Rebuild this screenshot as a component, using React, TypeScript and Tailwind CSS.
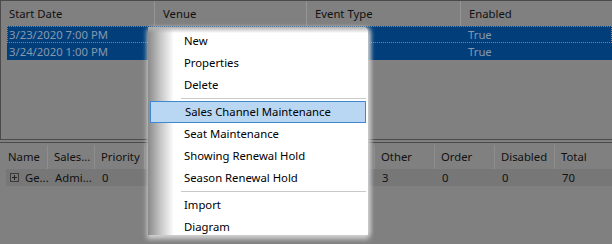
import React from "react";

const F = "font-['Noto_Sans',sans-serif] text-[11.3px] leading-none";

function TopHeader() {
  const cols = [
    { w: "w-[154px]", t: "Start Date" },
    { w: "w-[152px]", t: "Venue" },
    { w: "w-[154px]", t: "Event Type" },
    { w: "flex-1", t: "Enabled" },
  ];
  return (
    <div className="flex h-[25px] items-stretch">
      {cols.map((c, i) => (
        <div
          key={i}
          className={`${c.w} flex items-center pl-[8px] text-[#111] ${i < 3 ? "border-r border-[#959595]" : ""} ${i > 0 ? "pl-[7px]" : ""}`}
        >
          {c.t}
        </div>
      ))}
    </div>
  );
}

function SelRow({ date, focus }: { date: string; focus?: boolean }) {
  return (
    <div className="ml-[6px] h-[17px] relative bg-[#023f7a] flex items-center text-[#8798ad]">
      {focus && (
        <div className="absolute inset-0 border border-dotted border-[#c0702a]" />
      )}
      <div className="w-[148px] pl-[2px]">{date}</div>
      <div className="w-[152px]" />
      <div className="w-[154px]" />
      <div className="pl-[7px]">True</div>
    </div>
  );
}

function BottomGrid() {
  const head = [
    { w: "w-[42px]", t: "Name" },
    { w: "w-[47px]", t: "Sales..." },
    { w: "w-[50px]", t: "Priority" },
    { w: "w-[230px]", t: "" },
    { w: "w-[60px]", t: "Other" },
    { w: "w-[60px]", t: "Order" },
    { w: "w-[60px]", t: "Disabled" },
    { w: "flex-1", t: "Total" },
  ];
  const data = ["Ge...", "Admi...", "0", "", "3", "0", "0", "70"];
  return (
    <div className="border-t border-[#4a4a4a] pt-[2px]">
      <div className="ml-[6px] flex h-[24px]">
        {head.map((c, i) => (
          <div
            key={i}
            className={`${c.w} flex items-center pl-[2px] text-[#111] ${i < 7 ? "border-r border-[#8e8e8e]" : ""} ${i > 0 ? "pl-[6px]" : ""}`}
          >
            {c.t}
          </div>
        ))}
      </div>
      <div className="ml-[6px] flex h-[17px] bg-[#777777] text-[#111]">
        {head.map((c, i) => (
          <div key={i} className={`${c.w} flex items-center ${i > 0 ? "pl-[7px]" : "pl-[4px]"}`}>
            {i === 0 ? (
              <>
                <span className="relative w-[9px] h-[9px] border border-[#3a3a3a] mr-[6px] shrink-0">
                  <span className="absolute left-[1px] right-[1px] top-[3px] h-[1px] bg-[#222]" />
                  <span className="absolute top-[1px] bottom-[1px] left-[3px] w-[1px] bg-[#222]" />
                </span>
                <span>{data[i]}</span>
              </>
            ) : (
              data[i]
            )}
          </div>
        ))}
      </div>
    </div>
  );
}

function MenuItem({ t, hl }: { t: string; hl?: boolean }) {
  return (
    <div
      className={`relative mx-[2px] h-[22px] flex items-center pl-[34px] text-[#000] ${hl ? "bg-[#b9d7f3] border border-[#3f88d0] pl-[33px]" : ""}`}
    >
      {t}
    </div>
  );
}

function Sep() {
  return (
    <div className="h-[5px] flex items-center pl-[33px] pr-[2px]">
      <div className="h-[1px] w-full bg-[#c9c9c9]" />
    </div>
  );
}

function Menu() {
  return (
    <div className="absolute left-[148px] top-[27px] w-[220px] h-[208px] bg-white rounded-tr-[5px] shadow-[0_3px_5px_1px_rgba(215,215,215,0.9),3px_0_4px_0_rgba(200,200,200,0.8)]">
      <div className="absolute left-0 top-0 bottom-0 w-[26px] bg-gradient-to-r from-[#8a8a8a] via-[#c8c8c8] to-white" />
      <div className="absolute left-0 right-0 top-0 h-[6px] bg-gradient-to-b from-[#b0b0b0] to-white/0 rounded-tr-[5px]" />
      <div className={`relative pt-[3px] ${F}`}>
        <MenuItem t="New" />
        <MenuItem t="Properties" />
        <MenuItem t="Delete" />
        <Sep />
        <MenuItem t="Sales Channel Maintenance" hl />
        <MenuItem t="Seat Maintenance" />
        <MenuItem t="Showing Renewal Hold" />
        <MenuItem t="Season Renewal Hold" />
        <Sep />
        <MenuItem t="Import" />
        <MenuItem t="Diagram" />
      </div>
    </div>
  );
}

export default function App() {
  return (
    <div className={`relative w-[612px] h-[244px] overflow-hidden bg-[#808080] ${F}`}>
      <div className="h-[140px] border-t border-l border-[#4a4a4a] border-b">
        <TopHeader />
        <SelRow date="3/23/2020 7:00 PM" focus />
        <SelRow date="3/24/2020 1:00 PM" />
      </div>
      <div className="h-[2px]" />
      <BottomGrid />
      <Menu />
    </div>
  );
}
